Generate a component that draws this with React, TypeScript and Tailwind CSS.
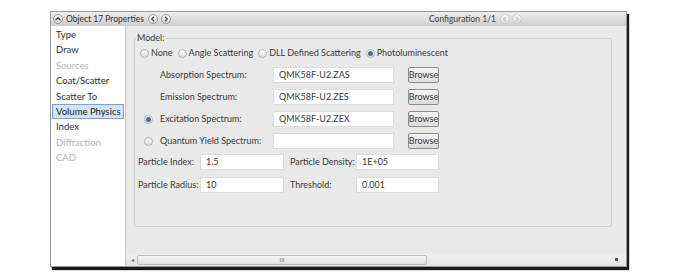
import React from "react";

const font = { fontFamily: 'Lato, "Liberation Sans", sans-serif' };

function CircleArrow({ dir, disabled }: { dir: "left" | "right" | "up"; disabled?: boolean }) {
  const d =
    dir === "left" ? "M5.4 3 L3.6 4.8 L5.4 6.6" : dir === "right" ? "M4.2 3 L6 4.8 L4.2 6.6" : "M2.8 5.6 L4.8 3.6 L6.8 5.6";
  return (
    <svg width="10" height="10" viewBox="0 0 9.6 9.6" className="shrink-0">
      <defs>
        <linearGradient id={`g-${dir}-${disabled ? 1 : 0}`} x1="0" y1="0" x2="0" y2="1">
          <stop offset="0" stopColor="#ffffff" />
          <stop offset="1" stopColor="#d8d8d8" />
        </linearGradient>
      </defs>
      <circle cx="4.8" cy="4.8" r="4.3" fill={`url(#g-${dir}-${disabled ? 1 : 0})`} stroke={disabled ? "#c4c4c4" : "#8a8a8a"} strokeWidth="0.8" />
      <path d={d} fill="none" stroke={disabled ? "#c0c0c0" : "#333"} strokeWidth="1.2" strokeLinecap="round" strokeLinejoin="round" />
    </svg>
  );
}

function Radio({ checked }: { checked?: boolean }) {
  return (
    <span className="inline-flex h-[9px] w-[9px] shrink-0 items-center justify-center rounded-full border border-[#b4b4b4] bg-gradient-to-b from-[#f6f6f6] to-[#e0e0e0]">
      {checked ? <span className="h-[5px] w-[5px] rounded-full bg-[#52708c]" /> : null}
    </span>
  );
}

function Input({ value, w }: { value: string; w: string }) {
  return (
    <div className={`flex h-[16px] items-center whitespace-nowrap border border-[#dcdcdc] bg-white pl-[5px] text-[9px] text-[#3a3a3a] ${w}`}>
      {value}
    </div>
  );
}

function BrowseBtn() {
  return (
    <div className="flex h-[16px] w-[31px] items-center justify-center rounded-[2px] border border-[#8c8c8c] bg-gradient-to-b from-[#f6f6f6] to-[#dcdcdc] text-[9px] text-[#3a3a3a]">
      Browse
    </div>
  );
}

const navItems: { label: string; disabled?: boolean; active?: boolean }[] = [
  { label: "Type" },
  { label: "Draw" },
  { label: "Sources", disabled: true },
  { label: "Coat/Scatter" },
  { label: "Scatter To" },
  { label: "Volume Physics", active: true },
  { label: "Index" },
  { label: "Diffraction", disabled: true },
  { label: "CAD", disabled: true },
];

const spectra = [
  { label: "Absorption Spectrum:", value: "QMK58F-U2.ZAS" },
  { label: "Emission Spectrum:", value: "QMK58F-U2.ZES" },
  { label: "Excitation Spectrum:", value: "QMK58F-U2.ZEX", radio: "on" },
  { label: "Quantum Yield Spectrum:", value: "", radio: "off" },
];

export default function App() {
  return (
    <div className="h-[278px] w-[687px] overflow-hidden whitespace-nowrap bg-white pl-[50px] pt-[11px]" style={font}>
      <div className="flex h-[256px] w-[577px] flex-col border border-[#9a9a9a] bg-white shadow-[2px_3px_1px_rgba(0,0,0,0.9)]">
        {/* title bar */}
        <div className="flex h-[14px] items-center bg-gradient-to-b from-[#ececec] to-[#cdcdcd] pl-[2px] text-[8.5px] leading-none text-[#333]">
          <CircleArrow dir="up" />
          <span className="ml-[3px]">Object 17 Properties</span>
          <span className="ml-[4px] flex gap-[3px]">
            <CircleArrow dir="left" />
            <CircleArrow dir="right" />
          </span>
          <span className="ml-auto text-[#444]">Configuration 1/1</span>
          <span className="ml-[4px] mr-[104px] flex gap-[2px]">
            <CircleArrow dir="left" disabled />
            <CircleArrow dir="right" disabled />
          </span>
        </div>

        <div className="flex min-h-0 flex-1">
          {/* nav */}
          <div className="w-[75px] shrink-0 border-r border-[#c8c8c8] bg-white pt-[1px] text-[9.5px] leading-[13.4px]">
            {navItems.map((it) => (
              <div
                key={it.label}
                className={
                  it.active
                    ? "mx-[1px] border border-[#7da2ce] bg-[#d3e3f6] pl-[3px] text-[#222]"
                    : `mx-[1px] border border-transparent pl-[3px] ${it.disabled ? "text-[#b4b4b4]" : "text-[#333]"}`
                }
              >
                {it.label}
              </div>
            ))}
          </div>

          {/* content */}
          <div className="flex min-w-0 flex-1 flex-col bg-[#e9e9e9] text-[9px] text-[#3a3a3a]">
            <div className="flex-1 pl-[8px] pr-[14px] pt-[12px]">
              <div className="relative h-[189px] rounded-[2px] border border-[#d0d0d0]">
                <span className="absolute -top-[7px] left-[1px] bg-[#e9e9e9] px-[1px] leading-[12px]">Model:</span>
                <div className="flex items-center pl-[5px] pt-[8px] leading-[12px]">
                  <Radio />
                  <span className="ml-[2px] mr-[5px]">None</span>
                  <Radio />
                  <span className="ml-[2px] mr-[5px]">Angle Scattering</span>
                  <Radio />
                  <span className="ml-[2px] mr-[5px]">DLL Defined Scattering</span>
                  <Radio checked />
                  <span className="ml-[2px]">Photoluminescent</span>
                </div>

                <div className="mt-[8px] flex flex-col gap-[6px]">
                  {spectra.map((s) => (
                    <div key={s.label} className="flex h-[16px] items-center">
                      <span className="flex w-[24px] justify-center pl-[2px]">
                        {s.radio ? <Radio checked={s.radio === "on"} /> : null}
                      </span>
                      <span className="w-[114px] pl-[1px]">{s.label}</span>
                      <Input value={s.value} w="w-[121px]" />
                      <span className="ml-[14px]">
                        <BrowseBtn />
                      </span>
                    </div>
                  ))}
                </div>

                <div className="mt-[5px] grid grid-cols-[62px_90px_66px_83px] items-center gap-y-[7px] pl-[3px]">
                  <span>Particle Index:</span>
                  <Input value="1.5" w="w-[84px]" />
                  <span>Particle Density:</span>
                  <Input value="1E+05" w="w-[83px]" />
                  <span>Particle Radius:</span>
                  <Input value="10" w="w-[84px]" />
                  <span>Threshold:</span>
                  <Input value="0.001" w="w-[83px]" />
                </div>
              </div>
            </div>

            {/* horizontal scrollbar */}
            <div className="flex h-[12px] items-center bg-gradient-to-b from-[#f0f0f0] to-[#e4e4e4] pb-[1px]">
              <span className="ml-[2px] w-[8px] text-center text-[6px] leading-none text-[#666]">◂</span>
              <div className="ml-[1px] flex h-[10px] w-[290px] items-center justify-center rounded-[2px] border border-[#b9b9b9] bg-gradient-to-b from-[#f7f7f7] to-[#dedede] text-[6px] leading-none text-[#777]">
                III
              </div>
              <div className="flex-1" />
              <span className="mr-[8px] h-[3px] w-[3px] bg-[#555]" />
            </div>
          </div>
        </div>
      </div>
    </div>
  );
}
